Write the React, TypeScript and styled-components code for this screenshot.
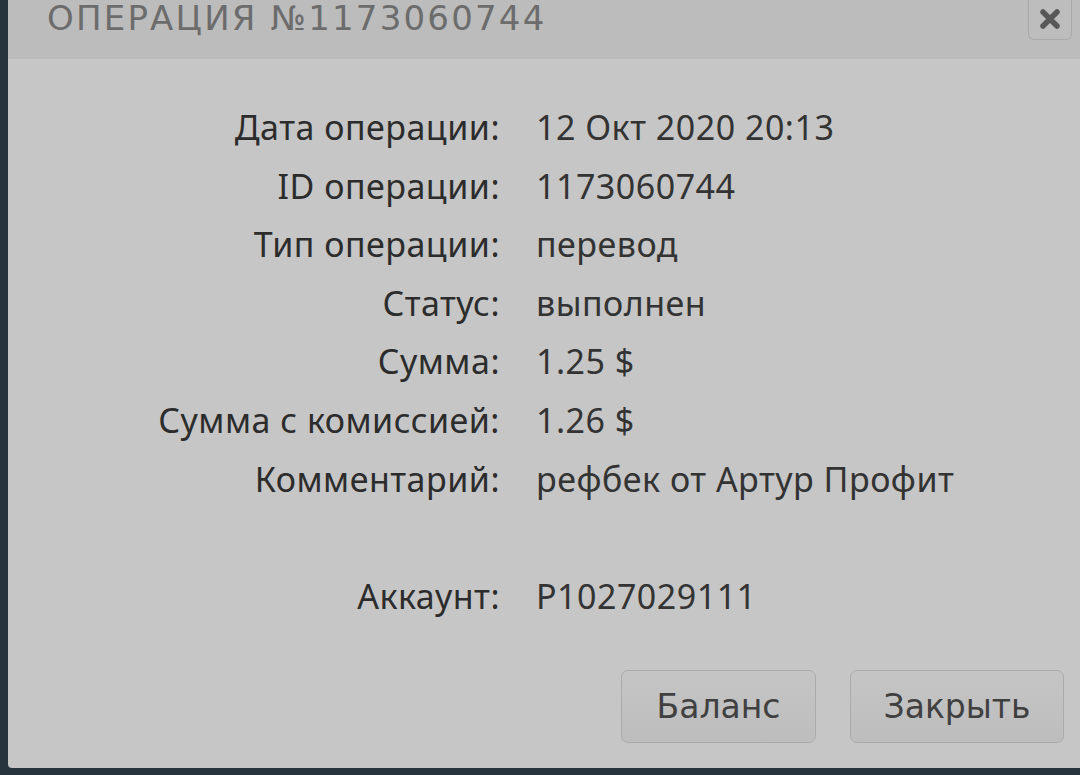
import React from "react";
import styled, { createGlobalStyle } from "styled-components";

const Global = createGlobalStyle`
  html, body { margin: 0; padding: 0; background: #27333d; }
  body { width: 1080px; height: 775px; overflow: hidden; }
`;

const Page = styled.div`
  display: grid;
  grid-template-columns: 8px 1fr;
  grid-template-rows: 768px 7px;
  width: 1080px;
  height: 775px;
  background: #27333d;
`;

const Dialog = styled.div`
  grid-column: 2;
  grid-row: 1;
  display: flex;
  flex-direction: column;
  background: #c6c6c6;
  border-bottom-left-radius: 4px;
`;

const Header = styled.div`
  height: 60px;
  background: #bcbcbc;
  border-bottom: 1px solid #c9c9c9;
  display: flex;
  align-items: flex-start;
  justify-content: space-between;
  padding: 0 8px 0 39px;
  box-sizing: border-box;
`;

const Title = styled.h1`
  margin: 0;
  margin-top: -4px;
  font-family: "DejaVu Sans", sans-serif;
  font-weight: 400;
  font-size: 34px;
  letter-spacing: 2.2px;
  color: #6c6c6c;
  line-height: 44px;
`;

const CloseButton = styled.button`
  width: 44px;
  height: 41px;
  margin-top: -1px;
  border: 1px solid #a9a9a9;
  border-top: none;
  border-radius: 0 0 6px 6px;
  background: #bdbdbd;
  display: flex;
  align-items: center;
  justify-content: center;
  padding: 0;
`;

const Body = styled.div`
  display: grid;
  grid-template-columns: 492px 1fr;
  column-gap: 36px;
  grid-auto-rows: 58.6px;
  padding-top: 38px;
  font-family: "Noto Sans", sans-serif;
  font-size: 34px;
  letter-spacing: 0.5px;
`;

const Label = styled.div`
  text-align: right;
  color: #2c2c2c;
  line-height: 58.6px;
  white-space: nowrap;
`;

const Value = styled.div`
  color: #333;
  line-height: 58.6px;
  white-space: nowrap;
`;

const Footer = styled.div`
  display: flex;
  justify-content: flex-end;
  gap: 34px;
  padding: 45px 16px 0 0;
`;

const Button = styled.button<{ $w: number }>`
  width: ${(p) => p.$w}px;
  height: 73px;
  border: 1px solid #ababab;
  border-radius: 7px;
  background: linear-gradient(#c5c5c5, #bdbdbd);
  font-family: "DejaVu Sans", sans-serif;
  font-size: 33px;
  color: #404040;
  padding: 0;
`;

const rows: [string, string][] = [
  ["Дата операции:", "12 Окт 2020 20:13"],
  ["ID операции:", "1173060744"],
  ["Тип операции:", "перевод"],
  ["Статус:", "выполнен"],
  ["Сумма:", "1.25 $"],
  ["Сумма с комиссией:", "1.26 $"],
  ["Комментарий:", "рефбек от Артур Профит"],
  ["", ""],
  ["Аккаунт:", "P1027029111"],
];

export default function App() {
  return (
    <>
      <Global />
      <Page>
        <Dialog>
          <Header>
            <Title>ОПЕРАЦИЯ №1173060744</Title>
            <CloseButton aria-label="close">
              <svg width="22" height="22" viewBox="0 0 22 22">
                <path d="M4 4 L18 18 M18 4 L4 18" stroke="#585858" strokeWidth="5.5" strokeLinecap="round" />
              </svg>
            </CloseButton>
          </Header>
          <Body>
            {rows.map(([l, v], i) => (
              <React.Fragment key={i}>
                <Label>{l}</Label>
                <Value>{v}</Value>
              </React.Fragment>
            ))}
          </Body>
          <Footer>
            <Button $w={195}>Баланс</Button>
            <Button $w={214}>Закрыть</Button>
          </Footer>
        </Dialog>
      </Page>
    </>
  );
}
